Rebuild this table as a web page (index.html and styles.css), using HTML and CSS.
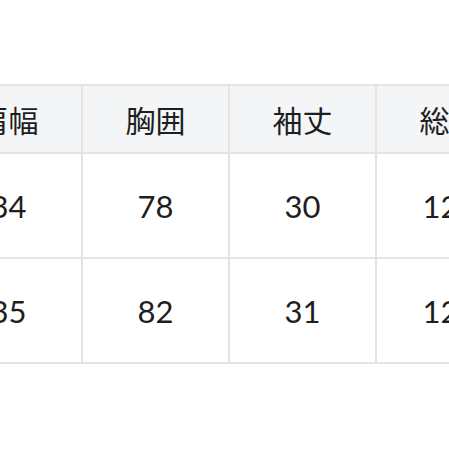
FILE: index.html
```html
<!DOCTYPE html>
<html lang="ja">
<head>
<meta charset="utf-8">
<link rel="stylesheet" href="styles.css">
</head>
<body>
<table class="size-table">
  <thead>
    <tr><th>肩幅</th><th>胸囲</th><th>袖丈</th><th>総丈</th></tr>
  </thead>
  <tbody>
    <tr><td>34</td><td>78</td><td>30</td><td>125</td></tr>
    <tr><td>35</td><td>82</td><td>31</td><td>126</td></tr>
  </tbody>
</table>
</body>
</html>
```
FILE: styles.css
```css
html, body {
  margin: 0;
  padding: 0;
  background: #ffffff;
  overflow: hidden;
}
body {
  width: 449px;
  height: 449px;
  font-family: Lato, "Noto Sans CJK JP", sans-serif;
  color: #1e1e1e;
}
.size-table {
  border-collapse: collapse;
  table-layout: fixed;
  width: 590px;
  margin-top: 84px;
  margin-left: -66px;
}
.size-table th,
.size-table td {
  border: 2px solid #e4e4e4;
  text-align: center;
  vertical-align: middle;
  padding: 0;
  width: 145px;
  font-weight: 400;
}
.size-table th {
  background: #f3f5f7;
  height: 66px;
  font-size: 30px;
}
.size-table td {
  height: 103px;
  font-size: 31px;
}
```
